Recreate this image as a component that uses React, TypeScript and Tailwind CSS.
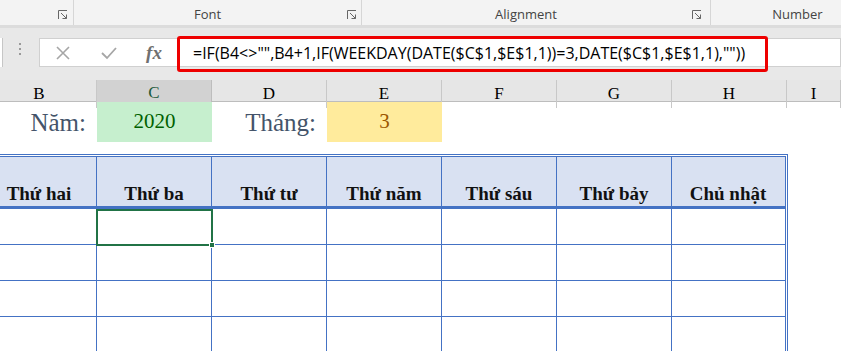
import React from "react";

const Launcher = () => (
  <svg width="10" height="10" viewBox="0 0 10 10" className="block">
    <path d="M0.5 9 V0.5 H9" fill="none" stroke="#666" strokeWidth="1" />
    <path d="M3 3 L8.5 8.5" fill="none" stroke="#666" strokeWidth="1" />
    <path d="M4.5 8.5 H8.5 V4.5" fill="none" stroke="#666" strokeWidth="1" />
  </svg>
);

const cols = ["B", "C", "D", "E", "F", "G", "H", "I"];
const days = ["Thứ hai", "Thứ ba", "Thứ tư", "Thứ năm", "Thứ sáu", "Thứ bảy", "Chủ nhật"];
const grid = "grid grid-cols-[115px_115px_115px_115px_115px_115px_115px_1fr] w-[859px] ml-[-18px]";
const tgrid = "grid grid-cols-[115px_115px_115px_115px_115px_115px_112px]";

export default function App() {
  return (
    <div className="w-[841px] h-[351px] overflow-hidden bg-white relative">
      {/* Ribbon group labels */}
      <div className="h-[25px] bg-[#f3f3f3] flex text-[13px] text-[#444] font-['Open_Sans',sans-serif]">
        <div className="w-[74px] flex items-center justify-end pr-[2px] border-r border-[#d6d6d6]">
          <div className="mr-[3px] mt-[4px]"><Launcher /></div>
        </div>
        <div className="w-[288px] flex items-center relative border-r border-[#d6d6d6]">
          <span className="flex-1 text-center pr-[20px] pt-[4px]">Font</span>
          <div className="absolute right-[4px] top-[10px]"><Launcher /></div>
        </div>
        <div className="w-[349px] flex items-center relative border-r border-[#d6d6d6]">
          <span className="flex-1 text-center pr-[20px] pt-[4px]">Alignment</span>
          <div className="absolute right-[8px] top-[10px]"><Launcher /></div>
        </div>
        <div className="flex-1 flex items-center">
          <span className="flex-1 text-center pl-[43px] pt-[4px]">Number</span>
        </div>
      </div>
      {/* Formula bar area */}
      <div className="h-[55px] bg-[#e8e8e8] border-t-[3px] border-[#dcdcdc] relative">
        <div className="absolute left-0 top-[10px] w-[3px] h-[29px] bg-white border-r border-[#c6c6c6]" />
        <div className="absolute left-[19px] top-[15px] flex flex-col gap-[3px]">
          <div className="w-[2px] h-[2px] bg-[#9a9a9a]" />
          <div className="w-[2px] h-[2px] bg-[#9a9a9a]" />
          <div className="w-[2px] h-[2px] bg-[#9a9a9a]" />
        </div>
        <div className="absolute left-[39px] top-[10px] right-0 h-[29px] bg-white border border-[#d0d0d0] flex items-center">
          <div className="w-[46px] flex justify-center">
            <svg width="14" height="14" viewBox="0 0 14 14">
              <path d="M1 1 L13 13 M13 1 L1 13" stroke="#a6a6a6" strokeWidth="1.6" />
            </svg>
          </div>
          <div className="w-[45px] flex justify-center">
            <svg width="16" height="14" viewBox="0 0 16 14">
              <path d="M1 7 L6 12 L15 2" fill="none" stroke="#a6a6a6" strokeWidth="1.8" />
            </svg>
          </div>
          <div className="w-[46px] flex justify-center">
            <span className="font-['Liberation_Serif',serif] italic font-bold text-[19px] text-[#707070] leading-none">fx</span>
          </div>
          <div className="pl-[16px] font-['Open_Sans',sans-serif] text-[16px] text-black whitespace-nowrap">
            =IF(B4&lt;&gt;"",B4+1,IF(WEEKDAY(DATE($C$1,$E$1,1))=3,DATE($C$1,$E$1,1),""))
          </div>
        </div>
        <div className="absolute left-[177px] top-[8px] w-[591px] h-[36px] border-[3px] border-[#ee0000] rounded-[3px]" />
      </div>
      {/* Column headers */}
      <div className={`${grid} h-[22px] bg-[#e6e6e6] border-b border-[#bdbdbd] font-['Liberation_Serif',serif] text-[17px] text-black`}>
        {cols.map((c, i) => (
          <div
            key={c}
            className={
              i === 1
                ? "flex items-center justify-center bg-[#d2d2d2] border-r border-[#bdbdbd] border-b-2 border-b-[#217346] text-[#1e5a3a]"
                : "flex items-center justify-center border-r border-[#c8c8c8]"
            }
          >
            {c}
          </div>
        ))}
      </div>
      {/* Row 1 */}
      <div className={`${grid} h-[41px] font-['Liberation_Serif',serif]`}>
        <div className="flex items-center justify-end pr-[11px] text-[#44546a] text-[25px]">Năm:</div>
        <div className="flex items-center justify-center bg-[#c6efce] text-[#006100] text-[21px] mb-[1px]">2020</div>
        <div className="flex items-center justify-end pr-[11px] text-[#44546a] text-[25px]">Tháng:</div>
        <div className="flex items-center justify-center bg-[#ffeb9c] text-[#9c5700] text-[21px] mb-[1px]">3</div>
        <div /><div /><div /><div />
      </div>
      {/* Row 2 spacer */}
      <div className="h-[11px]" />
      {/* Calendar table */}
      <div className="w-[806px] ml-[-18px] border-t-[3px] border-r-[3px] border-double border-[#4472c4] relative">
        <div className={`${tgrid} h-[52px] bg-[#d9e1f2] border-b-[3px] border-[#4472c4] font-['Liberation_Serif',serif] font-bold text-[19px] leading-[19px] text-[#111]`}>
          {days.map((d, i) => (
            <div
              key={d}
              className={`flex items-end justify-center pb-[3px] ${i < 6 ? "border-r border-[#4472c4]" : ""}`}
            >
              {d}
            </div>
          ))}
        </div>
        {[0, 1, 2, 3].map((r) => (
          <div key={r} className={`${tgrid} h-[36px] border-b border-[#4472c4]`}>
            {days.map((d, i) => (
              <div key={d} className={i < 6 ? "border-r border-[#4472c4]" : ""} />
            ))}
          </div>
        ))}
        {/* Selection */}
        <div className="absolute left-[114px] top-[52px] w-[117px] h-[37px] border-2 border-[#217346]" />
        <div className="absolute left-[227px] top-[85px] w-[6px] h-[6px] bg-[#217346] border border-white" />
      </div>
    </div>
  );
}
